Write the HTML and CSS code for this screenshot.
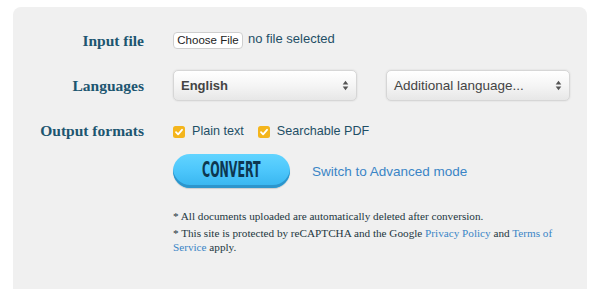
FILE: index.html
```html
<!DOCTYPE html>
<html>
<head>
<meta charset="utf-8">
<link rel="stylesheet" href="styles.css">
</head>
<body>
<div class="panel">
  <div class="row row-file">
    <div class="label">Input file</div>
    <div class="controls">
      <span class="file-btn">Choose File</span>
      <span class="file-text">no file selected</span>
    </div>
  </div>
  <div class="row row-lang">
    <div class="label">Languages</div>
    <div class="controls gap-selects">
      <div class="select bold"><span>English</span>
        <svg class="arrows" width="7" height="11" viewBox="0 0 7 11"><path d="M3.5 0.8 L6.3 4.4 L0.7 4.4 Z M3.5 10.2 L6.3 6.6 L0.7 6.6 Z" fill="#555"/></svg>
      </div>
      <div class="select"><span>Additional language...</span>
        <svg class="arrows" width="7" height="11" viewBox="0 0 7 11"><path d="M3.5 0.8 L6.3 4.4 L0.7 4.4 Z M3.5 10.2 L6.3 6.6 L0.7 6.6 Z" fill="#555"/></svg>
      </div>
    </div>
  </div>
  <div class="row row-out">
    <div class="label">Output formats</div>
    <div class="controls">
      <span class="check"><svg width="12" height="12" viewBox="0 0 12 12"><rect x="0" y="0" width="12" height="12" rx="2.5" fill="#f4b51c"/><path d="M3 6.2 L5.1 8.3 L9 3.8" stroke="#fff" stroke-width="1.8" fill="none" stroke-linecap="round" stroke-linejoin="round"/></svg></span>
      <span class="check-label">Plain text</span>
      <span class="check second"><svg width="12" height="12" viewBox="0 0 12 12"><rect x="0" y="0" width="12" height="12" rx="2.5" fill="#f4b51c"/><path d="M3 6.2 L5.1 8.3 L9 3.8" stroke="#fff" stroke-width="1.8" fill="none" stroke-linecap="round" stroke-linejoin="round"/></svg></span>
      <span class="check-label">Searchable PDF</span>
    </div>
  </div>
  <div class="row row-btn">
    <div class="label"></div>
    <div class="controls">
      <div class="convert"><span>CONVERT</span></div>
      <a class="switch">Switch to Advanced mode</a>
    </div>
  </div>
  <div class="row row-notes">
    <div class="label"></div>
    <div class="notes">
      <p>* All documents uploaded are automatically deleted after conversion.</p>
      <p>* This site is protected by reCAPTCHA and the Google <a>Privacy Policy</a> and <a>Terms of</a><br><a>Service</a> apply.</p>
    </div>
  </div>
</div>
</body>
</html>
```

FILE: styles.css
```css
html, body { margin: 0; padding: 0; background: #fff; }
body { font-family: "Liberation Sans", Arial, sans-serif; }
.panel {
  margin: 7px 0 0 13px;
  width: 574px;
  height: 282px;
  background: #f0f0f0;
  border-radius: 8px 8px 0 0;
  box-sizing: border-box;
  padding-top: 21px;
  display: flow-root;
}
.row { display: flex; align-items: center; }
.label {
  width: 131px;
  flex: none;
  text-align: right;
  font-family: "Liberation Serif", Georgia, serif;
  font-weight: bold;
  font-size: 15.5px;
  color: #1d5670;
}
.controls { margin-left: 29px; display: flex; align-items: center; }
.row-file { height: 24px; }
.row-file .label { margin-top: 2px; }
.file-btn {
  box-sizing: border-box;
  width: 70px; height: 17px;
  background: #fff;
  border: 1px solid #cfcfcf;
  border-radius: 4px;
  font-size: 11.5px;
  color: #222;
  display: flex; align-items: center; justify-content: center;
}
.file-text { margin-left: 5px; font-size: 13px; color: #1f4f66; margin-top: -4px; }
.row-lang { height: 31px; margin-top: 18px; }
.gap-selects { gap: 29px; }
.select {
  box-sizing: border-box;
  width: 184px; height: 31px;
  border: 1px solid #d6d6d6;
  border-radius: 5px;
  background: linear-gradient(#ffffff 0%, #f5f5f5 50%, #e7e7e7 100%);
  box-shadow: 0 0 2px rgba(0,0,0,0.12);
  display: flex; align-items: center; justify-content: space-between;
  padding: 0 7px 0 7px;
  font-size: 13.5px;
  color: #444;
}
.select.bold { font-weight: bold; font-size: 13px; }
.arrows { flex: none; }
.row-out { height: 20px; margin-top: 20px; }
.check { width: 12px; height: 12px; display: block; margin-top: 1px; }
.check svg { display: block; }
.check.second { margin-left: 14px; }
.check-label { margin-left: 7px; font-size: 12.6px; color: #1f4f66; }
.row-btn { height: 34px; margin-top: 13px; align-items: flex-start; }
.convert {
  box-sizing: border-box;
  width: 117px; height: 34px;
  border-radius: 17px;
  background: linear-gradient(#62d4ff 0%, #4cc6fb 50%, #36b4ee 100%);
  box-shadow: inset 0 -3px 0 #2c95cc, 0 1px 1px rgba(0,0,0,0.15);
  display: flex; align-items: center; justify-content: center;
  overflow: hidden;
}
.convert span {
  display: inline-block;
  font-family: "DejaVu Sans Condensed", "DejaVu Sans", sans-serif;
  font-stretch: condensed;
  font-weight: bold;
  font-size: 22px;
  color: #0d3750;
  transform: scale(0.56, 1);
  margin-top: -3px;
}
.switch { margin-left: 22px; font-size: 13.5px; color: #3a85c6; margin-top: 1px; }
.row-notes { margin-top: 21px; align-items: flex-start; }
.notes {
  margin-left: 29px;
  width: 382px;
  font-family: "Liberation Serif", Georgia, serif;
  font-size: 11.2px;
  color: #233640;
}
.notes p { margin: 0 0 3px 0; line-height: 14px; }
.notes a { color: #3a85c6; }
```
